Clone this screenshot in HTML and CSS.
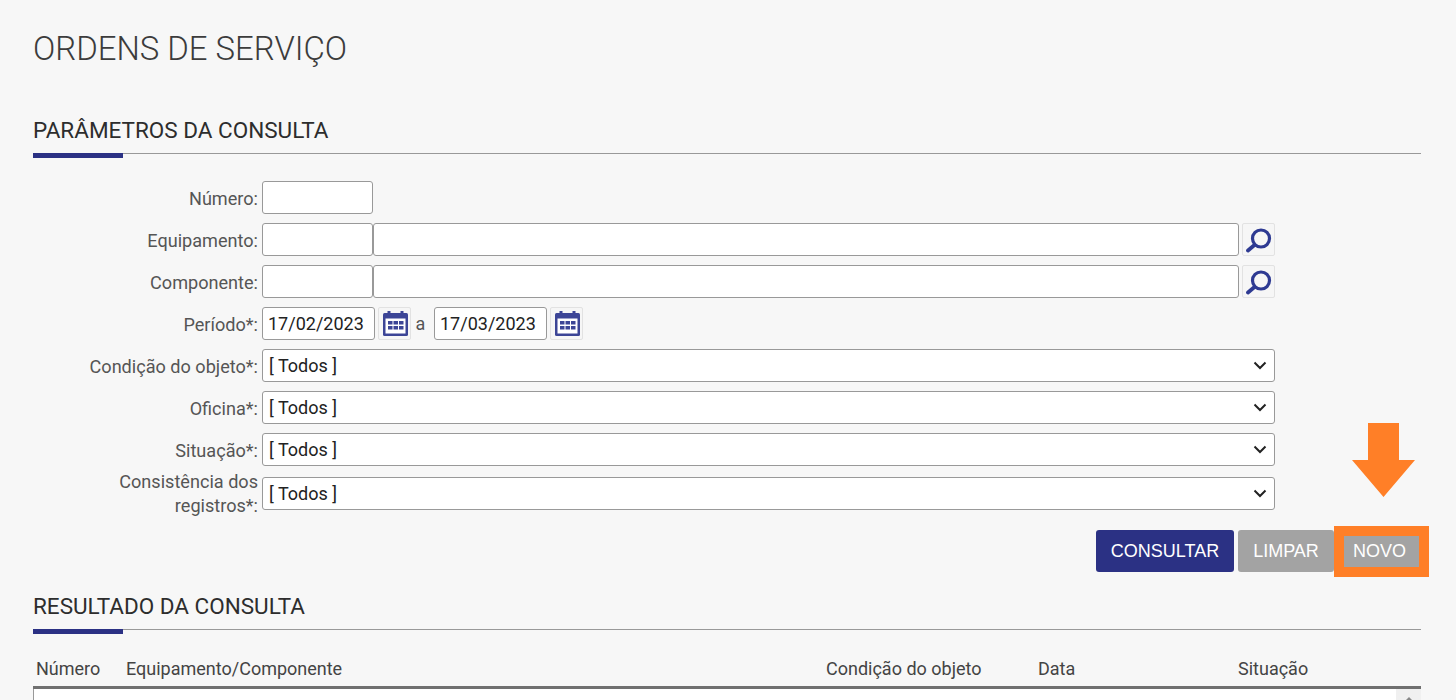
FILE: index.html
```html
<!doctype html>
<html lang="pt-BR">
<head>
	<meta charset="UTF-8" />
	<title>Ordens de Serviço</title>
	<link rel="stylesheet" href="styles.css">
</head>
<body>

	<div id="content">
		<h1>ORDENS DE SERVIÇO</h1>

		<h2 class="sectionTitle sectionFirst">PARÂMETROS DA CONSULTA</h2>

		<form class="params">
			<div class="row">
				<label class="rowLabel">Número:</label>
				<input class="field fieldCode" type="text">
			</div>
			<div class="row">
				<label class="rowLabel">Equipamento:</label>
				<input class="field fieldCode" type="text">
				<input class="field fieldName" type="text">
				<button class="iconBtn iconBtnSearch" type="button">
					<svg width="27" height="27" viewBox="0 0 27 27"><circle cx="16" cy="12.5" r="8.5" fill="none" stroke="#2e3a92" stroke-width="3.2"/><path d="M9.5 19 3 24.500" fill="none" stroke="#2e3a92" stroke-width="3.8" stroke-linecap="round"/></svg>
				</button>
			</div>
			<div class="row">
				<label class="rowLabel">Componente:</label>
				<input class="field fieldCode" type="text">
				<input class="field fieldName" type="text">
				<button class="iconBtn iconBtnSearch" type="button">
					<svg width="27" height="27" viewBox="0 0 27 27"><circle cx="16" cy="12.5" r="8.5" fill="none" stroke="#2e3a92" stroke-width="3.2"/><path d="M9.5 19 3 24.500" fill="none" stroke="#2e3a92" stroke-width="3.8" stroke-linecap="round"/></svg>
				</button>
			</div>
			<div class="row">
				<label class="rowLabel">Período*:</label>
				<input class="field fieldDate" type="text" value="17/02/2023">
				<button class="iconBtn" type="button">
					<svg width="27" height="27" viewBox="0 0 27 27"><rect x="2" y="3" width="25" height="23" rx="1.5" fill="#3c4596"/><rect x="4.5" y="8.5" width="20" height="15" fill="#fff"/><rect x="6.5" y="1" width="3" height="4" fill="#3c4596"/><rect x="19.5" y="1" width="3" height="4" fill="#3c4596"/><path d="M7 11h4.500v3.500H7zM12.500 11H17v3.500h-4.500zM18 11h4.500v3.500H18zM7 16h4.500v3.500H7zM12.500 16H17v3.500h-4.500zM18 16h4.500v3.500H18z" fill="#3c4596"/></svg>
				</button>
				<span class="dateSep">a</span>
				<input class="field fieldDate" type="text" value="17/03/2023">
				<button class="iconBtn" type="button">
					<svg width="27" height="27" viewBox="0 0 27 27"><rect x="2" y="3" width="25" height="23" rx="1.5" fill="#3c4596"/><rect x="4.5" y="8.5" width="20" height="15" fill="#fff"/><rect x="6.5" y="1" width="3" height="4" fill="#3c4596"/><rect x="19.5" y="1" width="3" height="4" fill="#3c4596"/><path d="M7 11h4.500v3.500H7zM12.500 11H17v3.500h-4.500zM18 11h4.500v3.500H18zM7 16h4.500v3.500H7zM12.500 16H17v3.500h-4.500zM18 16h4.500v3.500H18z" fill="#3c4596"/></svg>
				</button>
			</div>
			<div class="row">
				<label class="rowLabel">Condição do objeto*:</label>
				<select class="field fieldSelect"><option>[ Todos ]</option></select>
			</div>
			<div class="row">
				<label class="rowLabel">Oficina*:</label>
				<select class="field fieldSelect"><option>[ Todos ]</option></select>
			</div>
			<div class="row">
				<label class="rowLabel">Situação*:</label>
				<select class="field fieldSelect"><option>[ Todos ]</option></select>
			</div>
			<div class="row rowTall">
				<label class="rowLabel">Consistência dos registros*:</label>
				<select class="field fieldSelect"><option>[ Todos ]</option></select>
			</div>

			<div class="actions">
				<button class="btn btnPrimary" type="button">CONSULTAR</button>
				<button class="btn btnGrey" type="button">LIMPAR</button>
				<button class="btn btnGrey btnMarked" type="button">NOVO</button>
			</div>
		</form>

		<h2 class="sectionTitle sectionResult">RESULTADO DA CONSULTA</h2>

		<div class="resultHead">
			<span>Número</span>
			<span>Equipamento/Componente</span>
			<span>Condição do objeto</span>
			<span>Data</span>
			<span>Situação</span>
		</div>
		<div class="resultBody">
			<div class="scrollTrack"><span class="scrollArrow"></span></div>
		</div>
	</div>

	<svg class="markArrow" width="63" height="74" viewBox="0 0 63 74"><path d="M16 0H47V37H63L31.5 74 0 37H16Z" fill="#ff7f27"/></svg>

</body>
</html>
```

FILE: styles.css
```css
html, body {
	height: 700px;
	overflow: hidden;
}
body {
	margin: 0;
	position: relative;
	font-family: Roboto, "Liberation Sans", sans-serif;
	background: #f7f7f7;
	color: #333;
}
#content {
	width: 1388px;
	margin-left: 33px;
}
h1 {
	margin: 0;
	padding-top: 30px;
	font-size: 32.9px;
	line-height: 38px;
	font-weight: 300;
	color: #3c3c3c;
}
.sectionTitle {
	position: relative;
	margin: 0;
	height: 36px;
	font-size: 22.5px;
	line-height: 26px;
	font-weight: 400;
	color: #2d2d2d;
	border-bottom: 1px solid #999;
}
.sectionTitle::after {
	content: "";
	position: absolute;
	left: 0;
	top: 36px;
	width: 90px;
	height: 5px;
	background: #2b3184;
}
.sectionFirst {
	margin-top: 49px;
}
.sectionResult {
	margin-top: 16px;
}
.params {
	margin-top: 27px;
}
.row {
	display: flex;
	align-items: center;
	height: 33px;
	margin-bottom: 9px;
}
.rowTall {
	margin-top: 11px;
	margin-bottom: 0;
}
.rowLabel {
	flex: none;
	width: 225px;
	margin-right: 4px;
	padding-top: 2px;
	text-align: right;
	font-size: 18.1px;
	line-height: 24px;
	color: #555;
}
.rowTall .rowLabel {
	padding-top: 0;
}
.field {
	box-sizing: border-box;
	height: 33px;
	margin: 0;
	padding: 0 5px;
	background: #fff;
	border: 1px solid #999;
	border-radius: 3px;
	font-family: Roboto, "Liberation Sans", sans-serif;
	font-size: 18px;
	color: #222;
}
.fieldCode {
	width: 111px;
}
.fieldName {
	width: 866px;
}
.fieldDate {
	width: 113px;
}
.fieldSelect {
	width: 1013px;
	padding: 0 6px;
	appearance: none;
	background: #fff url("data:image/svg+xml,%3Csvg xmlns='http://www.w3.org/2000/svg' width='14' height='9' viewBox='0 0 14 9'%3E%3Cpath d='M1.500 1.500 7 7l5.500-5.500' fill='none' stroke='%23222' stroke-width='2'/%3E%3C/svg%3E") no-repeat right 7px center;
}
.iconBtn {
	flex: none;
	display: flex;
	align-items: center;
	justify-content: center;
	box-sizing: border-box;
	width: 33px;
	height: 33px;
	margin: 0 0 0 3px;
	padding: 0;
	background: #f6f6f6;
	border: 1px solid #e2e2e2;
	border-radius: 2px;
}
.dateSep {
	box-sizing: border-box;
	width: 23px;
	padding-right: 4px;
	text-align: center;
	font-size: 18px;
	color: #555;
}
.actions {
	display: flex;
	align-items: center;
	justify-content: flex-end;
	height: 51px;
	margin-top: 16px;
	gap: 4px;
}
.btn {
	box-sizing: border-box;
	height: 42px;
	margin-bottom: 1px;
	padding: 0;
	border: 0;
	border-radius: 3px;
	font-family: "Liberation Sans", Arial, sans-serif;
	font-size: 18px;
	color: #fff;
}
.btnPrimary {
	width: 138px;
	background: #2b3184;
}
.btnGrey {
	width: 96px;
	background: #a3a3a3;
}
.btnMarked {
	width: 95px;
	height: 51px;
	margin: 0 -8px 0 -4px;
	padding-right: 4px;
	border: 10px solid #ff7f27;
	border-radius: 0;
}
.resultHead {
	display: grid;
	grid-template-columns: 90px 700px 212px 200px 1fr;
	height: 37px;
	padding-left: 3px;
	margin-top: 22px;
	font-size: 18px;
	line-height: 34px;
	color: #444;
	border-bottom: 3px solid #707070;
	box-sizing: border-box;
}
.resultBody {
	display: flex;
	justify-content: flex-end;
	height: 11px;
	background: #fff;
	border-left: 1px solid #999;
}
.scrollTrack {
	position: relative;
	width: 25px;
	background: #f0f0f0;
}
.scrollArrow {
	position: absolute;
	left: 10px;
	top: 8px;
	width: 0;
	height: 0;
	border-left: 3px solid transparent;
	border-right: 3px solid transparent;
	border-bottom: 3px solid #888;
}
.markArrow {
	position: absolute;
	left: 1352px;
	top: 423px;
}
```
